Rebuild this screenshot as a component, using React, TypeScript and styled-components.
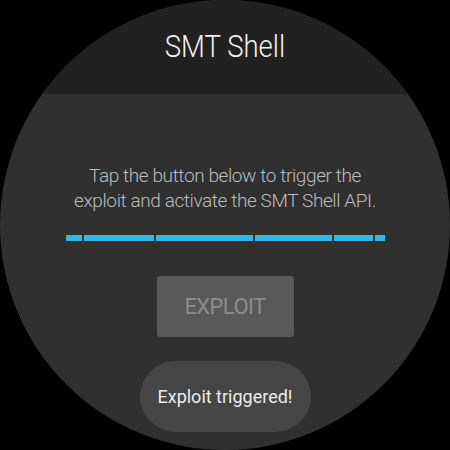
import React from "react";
import styled, { createGlobalStyle } from "styled-components";

const Global = createGlobalStyle`
  html, body { margin: 0; padding: 0; background: #000; }
  body { width: 450px; height: 450px; overflow: hidden; font-family: Roboto, "Noto Sans", sans-serif; }
`;

const Watch = styled.div`
  width: 450px;
  height: 450px;
  border-radius: 50%;
  overflow: hidden;
  background: #303030;
  display: flex;
  flex-direction: column;
  align-items: center;
`;

const Header = styled.header`
  width: 100%;
  height: 94px;
  flex: none;
  background: #212121;
  display: flex;
  align-items: center;
  justify-content: center;
`;

const Title = styled.h1`
  margin: 0 0 2px;
  font-family: Roboto, sans-serif;
  font-weight: 300;
  font-size: 32px;
  color: #f2f2f2;
  transform: scaleX(0.86);
`;

const Description = styled.p`
  margin: 69px 0 0;
  font-family: Roboto, sans-serif;
  font-weight: 300;
  font-size: 19px;
  line-height: 25px;
  color: #bdbdbd;
  text-align: center;
  letter-spacing: -0.4px;
`;

const Progress = styled.div`
  margin-top: 22px;
  width: 319px;
  height: 6px;
  display: flex;
  gap: 2px;
`;

const Segment = styled.div<{ $grow: number }>`
  flex: ${(p) => p.$grow} 1 0;
  background: #33b5e5;
`;

const ExploitButton = styled.button`
  margin-top: 35px;
  width: 137px;
  height: 61px;
  border: none;
  border-radius: 3px;
  background: #595959;
  color: #8c8c8c;
  font-family: Roboto, sans-serif;
  font-weight: 400;
  font-size: 22px;
  letter-spacing: -0.6px;
  padding: 0;
`;

const Toast = styled.div`
  margin-top: 24px;
  width: 171px;
  height: 71px;
  border-radius: 36px;
  background: #454545;
  color: #ececec;
  font-family: Roboto, sans-serif;
  font-size: 18px;
  display: flex;
  align-items: center;
  justify-content: center;
`;

const segments = [17, 71, 98, 79, 39, 10];

export default function App() {
  return (
    <>
      <Global />
      <Watch>
        <Header>
          <Title>SMT Shell</Title>
        </Header>
        <Description>
          Tap the button below to trigger the
          <br />
          exploit and activate the SMT Shell API.
        </Description>
        <Progress>
          {segments.map((s, i) => (
            <Segment key={i} $grow={s} />
          ))}
        </Progress>
        <ExploitButton>EXPLOIT</ExploitButton>
        <Toast>Exploit triggered!</Toast>
      </Watch>
    </>
  );
}
